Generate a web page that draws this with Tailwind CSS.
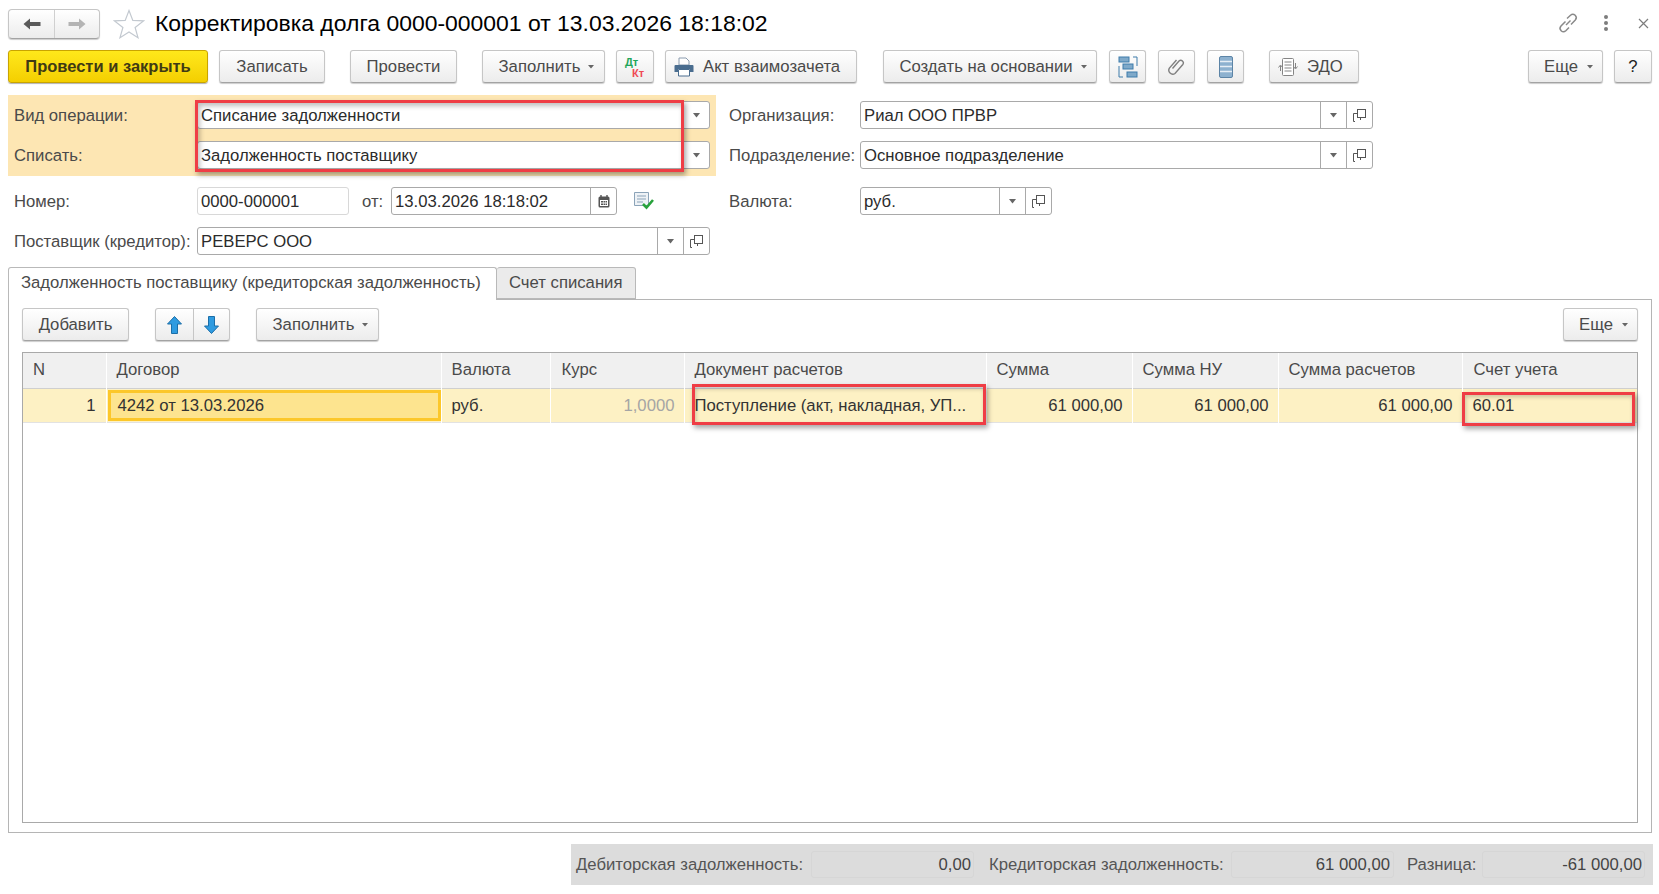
<!DOCTYPE html>
<html lang="ru">
<head>
    <meta charset="UTF-8" />
    <title>Корректировка долга</title>
    <script src="https://cdn.jsdelivr.net/npm/@tailwindcss/browser@4"></script>
</head>
<body class="bg-white">
<div class="relative w-[1659px] h-[894px] overflow-hidden bg-white font-['Liberation_Sans',Arial,sans-serif] text-[16.7px] text-[#4a4a4a]">

    <!-- Заголовок -->
    <div class="flex items-start h-[50px] pl-[8px]">
        <div class="flex mt-[9px] w-[92px] h-[30px] rounded-[4px] border border-[#c6c6c6] border-b-[#a3a3a3] bg-linear-to-b from-white to-[#ececec] shadow-[0_1px_1px_rgba(0,0,0,0.2)]">
            <div class="flex items-center justify-center w-[46px] border-r border-[#d0d0d0]">
                <svg width="18" height="14" viewBox="0 0 18 14"><path d="M0.5 7 L7 1.5 V5 H17.5 V9 H7 V12.5 Z" fill="#5a5a5a"/></svg>
            </div>
            <div class="flex items-center justify-center flex-1">
                <svg width="18" height="14" viewBox="0 0 18 14"><path d="M17.5 7 L11 1.5 V5 H0.5 V9 H11 V12.5 Z" fill="#b4b4b4"/></svg>
            </div>
        </div>
        <svg class="mt-[9px] ml-[13px]" width="32" height="30" viewBox="0 0 32 30"><path d="M16 1.5 L19.8 11.4 L30.5 11.9 L22.1 18.5 L25 28.7 L16 22.9 L7 28.7 L9.9 18.5 L1.5 11.9 L12.2 11.4 Z" fill="#fff" stroke="#c3c9d0" stroke-width="1.2"/></svg>
        <h1 class="mt-[9px] ml-[10px] text-[22.95px] leading-[28px] font-normal text-black whitespace-nowrap">Корректировка долга 0000-000001 от 13.03.2026 18:18:02</h1>
        <div class="ml-auto flex items-center h-[46px] pr-[10px]">
            <svg width="22" height="22" viewBox="0 0 22 22" fill="none" stroke="#8a8a8a" stroke-width="1.5"><path d="M9 13 L13.5 8.5"/><path d="M8.5 9.5 L4 14 a3.4 3.4 0 0 0 4.8 4.8 L12 15.5"/><path d="M10 6.5 L13.5 3.2 a3.4 3.4 0 0 1 4.8 4.8 L14 12.5"/></svg>
            <div class="ml-[25px] flex flex-col gap-[2px]">
                <span class="w-[4px] h-[4px] rounded-full bg-[#7d7d7d]"></span>
                <span class="w-[4px] h-[4px] rounded-full bg-[#7d7d7d]"></span>
                <span class="w-[4px] h-[4px] rounded-full bg-[#7d7d7d]"></span>
            </div>
            <svg class="ml-[30px]" width="11" height="11" viewBox="0 0 11 11" stroke="#7d7d7d" stroke-width="1.2"><path d="M1 1 L10 10 M10 1 L1 10"/></svg>
        </div>
    </div>

    <!-- Командная панель -->
    <div class="flex h-[33px] pl-[8px] text-[#4a4a4a]">
        <button class="w-[200px] rounded-[3px] border border-[#c9a400] bg-linear-to-b from-[#ffe81a] to-[#f4cf00] font-bold text-[16.5px] text-[#3f3a14] shadow-[0_1px_1px_rgba(0,0,0,0.3)]">Провести и закрыть</button>
        <button class="ml-[11px] w-[106px] rounded-[3px] border border-[#c6c6c6] border-b-[#a3a3a3] bg-linear-to-b from-white to-[#ececec] shadow-[0_1px_1px_rgba(0,0,0,0.2)]">Записать</button>
        <button class="ml-[25px] w-[107px] rounded-[3px] border border-[#c6c6c6] border-b-[#a3a3a3] bg-linear-to-b from-white to-[#ececec] shadow-[0_1px_1px_rgba(0,0,0,0.2)]">Провести</button>
        <button class="ml-[25px] w-[123px] pl-[6px] flex items-center justify-center gap-[8px] rounded-[3px] border border-[#c6c6c6] border-b-[#a3a3a3] bg-linear-to-b from-white to-[#ececec] shadow-[0_1px_1px_rgba(0,0,0,0.2)]">Заполнить
            <svg width="6" height="4" viewBox="0 0 6 4"><path d="M0 0 H6 L3 3.5 Z" fill="#666"/></svg></button>
        <button class="relative ml-[11px] w-[38px] rounded-[3px] border border-[#c6c6c6] border-b-[#a3a3a3] bg-linear-to-b from-white to-[#ececec] shadow-[0_1px_1px_rgba(0,0,0,0.2)]">
            <span class="absolute left-[8px] top-[6px] text-[11px] leading-[10px] font-bold text-[#1fa65a]">Дт</span>
            <span class="absolute left-[15px] top-[17px] text-[11px] leading-[10px] font-bold text-[#ef4a55]">Кт</span>
        </button>
        <button class="ml-[11px] w-[192px] pl-[8px] flex items-center justify-start gap-[9px] rounded-[3px] border border-[#c6c6c6] border-b-[#a3a3a3] bg-linear-to-b from-white to-[#ececec] shadow-[0_1px_1px_rgba(0,0,0,0.2)]">
            <svg width="20" height="20" viewBox="0 0 20 20"><path d="M5 8 V1 H12 L15 4 V8 Z" fill="#fff" stroke="#8a9bae"/><path d="M1.5 8 H18.5 Q19.5 8 19.5 9 V15 H16 V12 H4 V15 H0.5 V9 Q0.5 8 1.5 8 Z" fill="#4a6d8f"/><path d="M4.5 12.5 H15.5 V19 H4.5 Z" fill="#fff" stroke="#4a6d8f"/></svg>
            Акт взаимозачета</button>
        <button class="ml-[26px] w-[214px] pl-[6px] flex items-center justify-center gap-[8px] rounded-[3px] border border-[#c6c6c6] border-b-[#a3a3a3] bg-linear-to-b from-white to-[#ececec] shadow-[0_1px_1px_rgba(0,0,0,0.2)]">Создать на основании
            <svg width="6" height="4" viewBox="0 0 6 4"><path d="M0 0 H6 L3 3.5 Z" fill="#666"/></svg></button>
        <button class="ml-[12px] w-[37px] flex items-center justify-center rounded-[3px] border border-[#c6c6c6] border-b-[#a3a3a3] bg-linear-to-b from-white to-[#ececec] shadow-[0_1px_1px_rgba(0,0,0,0.2)]">
            <svg width="20" height="22" viewBox="0 0 20 22" fill="none"><path d="M1 10 V21 H5 M15 1 H19 V10" stroke="#3e7cab"/><rect x="1" y="1" width="10" height="5" fill="#7fa9c9" stroke="#3e7cab"/><rect x="5" y="8" width="10" height="5" fill="#7fa9c9" stroke="#3e7cab"/><rect x="9" y="16" width="10" height="5" fill="#7fa9c9" stroke="#3e7cab"/></svg>
        </button>
        <button class="ml-[12px] w-[37px] flex items-center justify-center rounded-[3px] border border-[#c6c6c6] border-b-[#a3a3a3] bg-linear-to-b from-white to-[#ececec] shadow-[0_1px_1px_rgba(0,0,0,0.2)]">
            <svg width="18" height="20" viewBox="0 0 18 20" fill="none" stroke="#7f7f7f" stroke-width="1.4"><path d="M4.5 11.5 L11 4 a2.6 2.6 0 0 1 3.8 3.5 L7 16.5 a4 4 0 0 1 -5.6 -5.4 L8.5 3"/></svg>
        </button>
        <button class="ml-[12px] w-[37px] flex items-center justify-center rounded-[3px] border border-[#c6c6c6] border-b-[#a3a3a3] bg-linear-to-b from-white to-[#ececec] shadow-[0_1px_1px_rgba(0,0,0,0.2)]">
            <svg width="14" height="22" viewBox="0 0 14 22"><rect x="0.5" y="0.5" width="13" height="21" rx="1.5" fill="#8db1cf" stroke="#5c84a6"/><path d="M1 5.5 H13 M1 10.5 H13 M1 15.5 H13" stroke="#e6eef5" stroke-width="1.6"/></svg>
        </button>
        <button class="ml-[25px] w-[90px] pl-[8px] flex items-center justify-start gap-[9px] rounded-[3px] border border-[#c6c6c6] border-b-[#a3a3a3] bg-linear-to-b from-white to-[#ececec] shadow-[0_1px_1px_rgba(0,0,0,0.2)]">
            <svg width="20" height="20" viewBox="0 0 20 20" fill="none" stroke="#858585"><rect x="4.5" y="1.5" width="11" height="17" rx="1" fill="#fff"/><path d="M6.5 5 H13.5 M6.5 8 H13.5 M6.5 11 H13.5 M6.5 14 H13.5"/><path d="M2.5 14 V9 M0.5 10.5 L2.5 8 L4.5 10.5 M17.5 6 V11 M15.5 9.5 L17.5 12 L19.5 9.5"/></svg>
            ЭДО</button>
        <button class="ml-[169px] w-[75px] pl-[6px] flex items-center justify-center gap-[9px] rounded-[3px] border border-[#c6c6c6] border-b-[#a3a3a3] bg-linear-to-b from-white to-[#ececec] shadow-[0_1px_1px_rgba(0,0,0,0.2)]">Еще
            <svg width="6" height="4" viewBox="0 0 6 4"><path d="M0 0 H6 L3 3.5 Z" fill="#666"/></svg></button>
        <button class="ml-[11px] w-[38px] rounded-[3px] border border-[#c6c6c6] border-b-[#a3a3a3] bg-linear-to-b from-white to-[#ececec] shadow-[0_1px_1px_rgba(0,0,0,0.2)] text-[#222]">?</button>
    </div>

    <!-- Реквизиты: операция и организация -->
    <div class="flex mt-[12px] pl-[8px]">
        <div class="relative w-[708px] h-[81px] bg-[#fde6b3] pt-[6px] pl-[6px]">
            <div class="flex items-center h-[28px]">
                <span class="w-[183px] shrink-0 pt-[2px]">Вид операции:</span>
                <div class="flex w-[513px] h-[28px] bg-white border border-[#a9a9a9] rounded-[3px]">
                    <div class="flex-1 pl-[3px] leading-[28px] text-[#2b2b2b]">Списание задолженности</div>
                    <div class="w-[26px] flex items-center justify-center"><svg width="7" height="5" viewBox="0 0 7 5"><path d="M0 0 H7 L3.5 4.5 Z" fill="#666"/></svg></div>
                </div>
            </div>
            <div class="flex items-center h-[28px] mt-[12px]">
                <span class="w-[183px] shrink-0 pt-[2px]">Списать:</span>
                <div class="flex w-[513px] h-[28px] bg-white border border-[#a9a9a9] rounded-[3px]">
                    <div class="flex-1 pl-[3px] leading-[28px] text-[#2b2b2b]">Задолженность поставщику</div>
                    <div class="w-[26px] flex items-center justify-center"><svg width="7" height="5" viewBox="0 0 7 5"><path d="M0 0 H7 L3.5 4.5 Z" fill="#666"/></svg></div>
                </div>
            </div>
            <div class="absolute left-[187px] top-[5px] w-[489px] h-[72px] border-[3px] border-[#ef3d45] shadow-[2px_3px_5px_rgba(0,0,0,0.35),inset_2px_3px_5px_rgba(0,0,0,0.25)]"></div>
        </div>
        <div class="ml-[13px] pt-[6px]">
            <div class="flex items-center h-[28px]">
                <span class="w-[131px] shrink-0 pt-[2px]">Организация:</span>
                <div class="flex w-[513px] h-[28px] bg-white border border-[#a9a9a9] rounded-[3px]">
                    <div class="flex-1 pl-[3px] leading-[28px] text-[#2b2b2b]">Риал ООО ПРВР</div>
                    <div class="w-[26px] flex items-center justify-center border-l border-[#a9a9a9]"><svg width="7" height="5" viewBox="0 0 7 5"><path d="M0 0 H7 L3.5 4.5 Z" fill="#666"/></svg></div>
                    <div class="w-[26px] flex items-center justify-center border-l border-[#a9a9a9]"><svg width="13" height="13" viewBox="0 0 13 13" fill="none" stroke="#555"><rect x="4.5" y="0.5" width="8" height="8" fill="#fff"/><path d="M4.5 4.5 H0.5 V12.5 H2 M7.5 8.5 V11"/></svg></div>
                </div>
            </div>
            <div class="flex items-center h-[28px] mt-[12px]">
                <span class="w-[131px] shrink-0 pt-[2px] whitespace-nowrap">Подразделение:</span>
                <div class="flex w-[513px] h-[28px] bg-white border border-[#a9a9a9] rounded-[3px]">
                    <div class="flex-1 pl-[3px] leading-[28px] text-[#2b2b2b]">Основное подразделение</div>
                    <div class="w-[26px] flex items-center justify-center border-l border-[#a9a9a9]"><svg width="7" height="5" viewBox="0 0 7 5"><path d="M0 0 H7 L3.5 4.5 Z" fill="#666"/></svg></div>
                    <div class="w-[26px] flex items-center justify-center border-l border-[#a9a9a9]"><svg width="13" height="13" viewBox="0 0 13 13" fill="none" stroke="#555"><rect x="4.5" y="0.5" width="8" height="8" fill="#fff"/><path d="M4.5 4.5 H0.5 V12.5 H2 M7.5 8.5 V11"/></svg></div>
                </div>
            </div>
        </div>
    </div>

    <!-- Номер, дата, валюта -->
    <div class="flex items-center h-[28px] mt-[11px] pl-[14px]">
        <span class="w-[183px] shrink-0 pt-[2px]">Номер:</span>
        <div class="w-[152px] h-[28px] border border-[#d8d8d8] rounded-[3px] pl-[3px] leading-[28px] text-[#2b2b2b]">0000-000001</div>
        <span class="ml-[13px] w-[29px] pt-[2px]">от:</span>
        <div class="flex w-[226px] h-[28px] border border-[#a9a9a9] rounded-[3px]">
            <div class="flex-1 pl-[3px] leading-[28px] text-[#2b2b2b]">13.03.2026 18:18:02</div>
            <div class="w-[26px] flex items-center justify-center border-l border-[#a9a9a9]">
                <svg width="12" height="13" viewBox="0 0 12 13"><rect x="0.5" y="1.5" width="11" height="11" rx="1.5" fill="#555"/><path d="M2 5 H10 V11 H2 Z" fill="#fff"/><path d="M3 0 V3 M9 0 V3" stroke="#555" stroke-width="1.4"/><path d="M3 6 H5 V7.5 H3 Z M5.5 6 H7 V7.5 H5.5 Z M7.5 6 H9 V7.5 H7.5 Z M3 8.5 H5 V10 H3 Z M5.5 8.5 H7 V10 H5.5 Z M7.5 8.5 H9 V10 H7.5 Z" fill="#555"/></svg>
            </div>
        </div>
        <svg class="ml-[17px]" width="20" height="18" viewBox="0 0 20 18"><path d="M0.5 0.5 H14.5 V13.5 H0.5 Z" fill="#eef2f6" stroke="#8ba3b8"/><path d="M3 4 H12 M3 7 H12 M3 10 H9" stroke="#8ba3b8"/><path d="M9 12 L12.5 15.5 L19 8" fill="none" stroke="#28a23c" stroke-width="2.6"/></svg>
        <span class="ml-[75px] w-[131px] shrink-0 pt-[2px]">Валюта:</span>
        <div class="flex w-[192px] h-[28px] border border-[#a9a9a9] rounded-[3px]">
            <div class="flex-1 pl-[3px] leading-[28px] text-[#2b2b2b]">руб.</div>
            <div class="w-[26px] flex items-center justify-center border-l border-[#a9a9a9]"><svg width="7" height="5" viewBox="0 0 7 5"><path d="M0 0 H7 L3.5 4.5 Z" fill="#666"/></svg></div>
            <div class="w-[26px] flex items-center justify-center border-l border-[#a9a9a9]"><svg width="13" height="13" viewBox="0 0 13 13" fill="none" stroke="#555"><rect x="4.5" y="0.5" width="8" height="8" fill="#fff"/><path d="M4.5 4.5 H0.5 V12.5 H2 M7.5 8.5 V11"/></svg></div>
        </div>
    </div>

    <!-- Поставщик -->
    <div class="flex items-center h-[28px] mt-[12px] pl-[14px]">
        <span class="w-[183px] shrink-0 pt-[2px] whitespace-nowrap">Поставщик (кредитор):</span>
        <div class="flex w-[513px] h-[28px] border border-[#a9a9a9] rounded-[3px]">
            <div class="flex-1 pl-[3px] leading-[28px] text-[#2b2b2b]">РЕВЕРС ООО</div>
            <div class="w-[26px] flex items-center justify-center border-l border-[#a9a9a9]"><svg width="7" height="5" viewBox="0 0 7 5"><path d="M0 0 H7 L3.5 4.5 Z" fill="#666"/></svg></div>
            <div class="w-[26px] flex items-center justify-center border-l border-[#a9a9a9]"><svg width="13" height="13" viewBox="0 0 13 13" fill="none" stroke="#555"><rect x="4.5" y="0.5" width="8" height="8" fill="#fff"/><path d="M4.5 4.5 H0.5 V12.5 H2 M7.5 8.5 V11"/></svg></div>
        </div>
    </div>

    <!-- Вкладки -->
    <div class="relative z-10 flex h-[32px] mt-[12px] ml-[8px]">
        <div class="w-[489px] h-[33px] bg-white border border-b-0 border-[#b9b9b9] rounded-t-[3px] pl-[12px] leading-[30px] whitespace-nowrap">Задолженность поставщику (кредиторская задолженность)</div>
        <div class="w-[139px] h-[32px] bg-[#ebebeb] border border-l-0 border-[#b9b9b9] rounded-t-[3px] pl-[12px] leading-[30px] whitespace-nowrap">Счет списания</div>
    </div>
    <div class="ml-[8px] w-[1644px] h-[534px] border border-[#b5b5b5] px-[13px] pt-[8px]">
        <div class="flex h-[33px]">
            <button class="w-[107px] rounded-[3px] border border-[#c6c6c6] border-b-[#a3a3a3] bg-linear-to-b from-white to-[#ececec] shadow-[0_1px_1px_rgba(0,0,0,0.2)]">Добавить</button>
            <div class="flex ml-[26px] w-[75px] rounded-[3px] border border-[#c6c6c6] border-b-[#a3a3a3] bg-linear-to-b from-white to-[#ececec] shadow-[0_1px_1px_rgba(0,0,0,0.2)]">
                <div class="w-[38px] flex items-center justify-center border-r border-[#c6c6c6]">
                    <svg width="15" height="18" viewBox="0 0 15 18"><path d="M7.5 0.5 L14.5 8 H10.5 V17.5 H4.5 V8 H0.5 Z" fill="#2f9be0" stroke="#1b6ea8"/></svg>
                </div>
                <div class="flex-1 flex items-center justify-center">
                    <svg width="15" height="18" viewBox="0 0 15 18"><path d="M7.5 17.5 L14.5 10 H10.5 V0.5 H4.5 V10 H0.5 Z" fill="#2f9be0" stroke="#1b6ea8"/></svg>
                </div>
            </div>
            <button class="ml-[26px] w-[123px] pl-[6px] flex items-center justify-center gap-[8px] rounded-[3px] border border-[#c6c6c6] border-b-[#a3a3a3] bg-linear-to-b from-white to-[#ececec] shadow-[0_1px_1px_rgba(0,0,0,0.2)]">Заполнить
                <svg width="6" height="4" viewBox="0 0 6 4"><path d="M0 0 H6 L3 3.5 Z" fill="#666"/></svg></button>
            <button class="ml-auto w-[75px] pl-[6px] flex items-center justify-center gap-[9px] rounded-[3px] border border-[#c6c6c6] border-b-[#a3a3a3] bg-linear-to-b from-white to-[#ececec] shadow-[0_1px_1px_rgba(0,0,0,0.2)]">Еще
                <svg width="6" height="4" viewBox="0 0 6 4"><path d="M0 0 H6 L3 3.5 Z" fill="#666"/></svg></button>
        </div>

        <!-- Таблица -->
        <div class="relative mt-[11px] w-[1616px] h-[471px] border border-[#a9a9a9]">
            <table class="table-fixed w-full border-collapse">
                <colgroup>
                    <col class="w-[83px]" /><col class="w-[335px]" /><col class="w-[109px]" /><col class="w-[134px]" /><col class="w-[302px]" /><col class="w-[146px]" /><col class="w-[146px]" /><col class="w-[184px]" /><col class="w-[175px]" />
                </colgroup>
                <thead>
                    <tr class="h-[35px] bg-[#f0f0f0] text-left font-normal border-b border-[#cfcfcf]">
                        <th class="font-normal pl-[10px] pb-[2px] border-r border-white">N</th>
                        <th class="font-normal pl-[10px] pb-[2px] border-r border-white">Договор</th>
                        <th class="font-normal pl-[10px] pb-[2px] border-r border-white">Валюта</th>
                        <th class="font-normal pl-[11px] pb-[2px] border-r border-white">Курс</th>
                        <th class="font-normal pl-[10px] pb-[2px] border-r border-white">Документ расчетов</th>
                        <th class="font-normal pl-[10px] pb-[2px] border-r border-white">Сумма</th>
                        <th class="font-normal pl-[10px] pb-[2px] border-r border-white">Сумма НУ</th>
                        <th class="font-normal pl-[10px] pb-[2px] border-r border-white">Сумма расчетов</th>
                        <th class="font-normal pl-[11px] pb-[2px]">Счет учета</th>
                    </tr>
                </thead>
                <tbody>
                    <tr class="h-[34px] bg-[#fdf1c4] text-[#333] border-b border-[#e2e2e2]">
                        <td class="text-right pr-[10px] pt-[2px] border-r border-white">1</td>
                        <td class="p-0 border-r border-white">
                            <div class="h-[31px] ml-[1px] pl-[7px] border-[3px] border-[#fcc72a] bg-[#fde48f] leading-[26px]">4242 от 13.03.2026</div>
                        </td>
                        <td class="pl-[10px] pt-[2px] border-r border-white">руб.</td>
                        <td class="text-right pr-[9px] pt-[2px] text-[#a5a5a5] border-r border-white">1,0000</td>
                        <td class="pl-[10px] pt-[2px] border-r border-white whitespace-nowrap overflow-hidden">Поступление (акт, накладная, УП...</td>
                        <td class="text-right pr-[9px] pt-[2px] border-r border-white">61 000,00</td>
                        <td class="text-right pr-[9px] pt-[2px] border-r border-white">61 000,00</td>
                        <td class="text-right pr-[9px] pt-[2px] border-r border-white">61 000,00</td>
                        <td class="pl-[10px] pt-[2px]">60.01</td>
                    </tr>
                </tbody>
            </table>
            <div class="absolute left-[669px] top-[31px] w-[294px] h-[41px] border-[3px] border-[#ef3d45] shadow-[2px_3px_5px_rgba(0,0,0,0.35),inset_1px_2px_4px_rgba(0,0,0,0.2)]"></div>
            <div class="absolute left-[1439px] top-[39px] w-[173px] h-[34px] border-[3px] border-[#ef3d45] shadow-[2px_3px_5px_rgba(0,0,0,0.35),inset_1px_2px_4px_rgba(0,0,0,0.2)]"></div>
        </div>
    </div>

    <!-- Итоги -->
    <div class="flex items-center mt-[11px] ml-[571px] w-[1082px] h-[41px] bg-[#dcdcdc] text-[#555]">
        <span class="pl-[5px] w-[240px] shrink-0 whitespace-nowrap">Дебиторская задолженность:</span>
        <div class="w-[163px] h-[27px] border border-[#d6d6d6] rounded-[3px] text-right pr-[2px] leading-[25px] text-[#444]">0,00</div>
        <span class="ml-[15px] w-[242px] shrink-0 whitespace-nowrap">Кредиторская задолженность:</span>
        <div class="w-[163px] h-[27px] border border-[#d6d6d6] rounded-[3px] text-right pr-[3px] leading-[25px] text-[#444]">61 000,00</div>
        <span class="ml-[13px] w-[75px] shrink-0">Разница:</span>
        <div class="w-[163px] h-[27px] border border-[#d6d6d6] rounded-[3px] text-right pr-[2px] leading-[25px] text-[#444]">-61 000,00</div>
    </div>
</div>
</body>
</html>
